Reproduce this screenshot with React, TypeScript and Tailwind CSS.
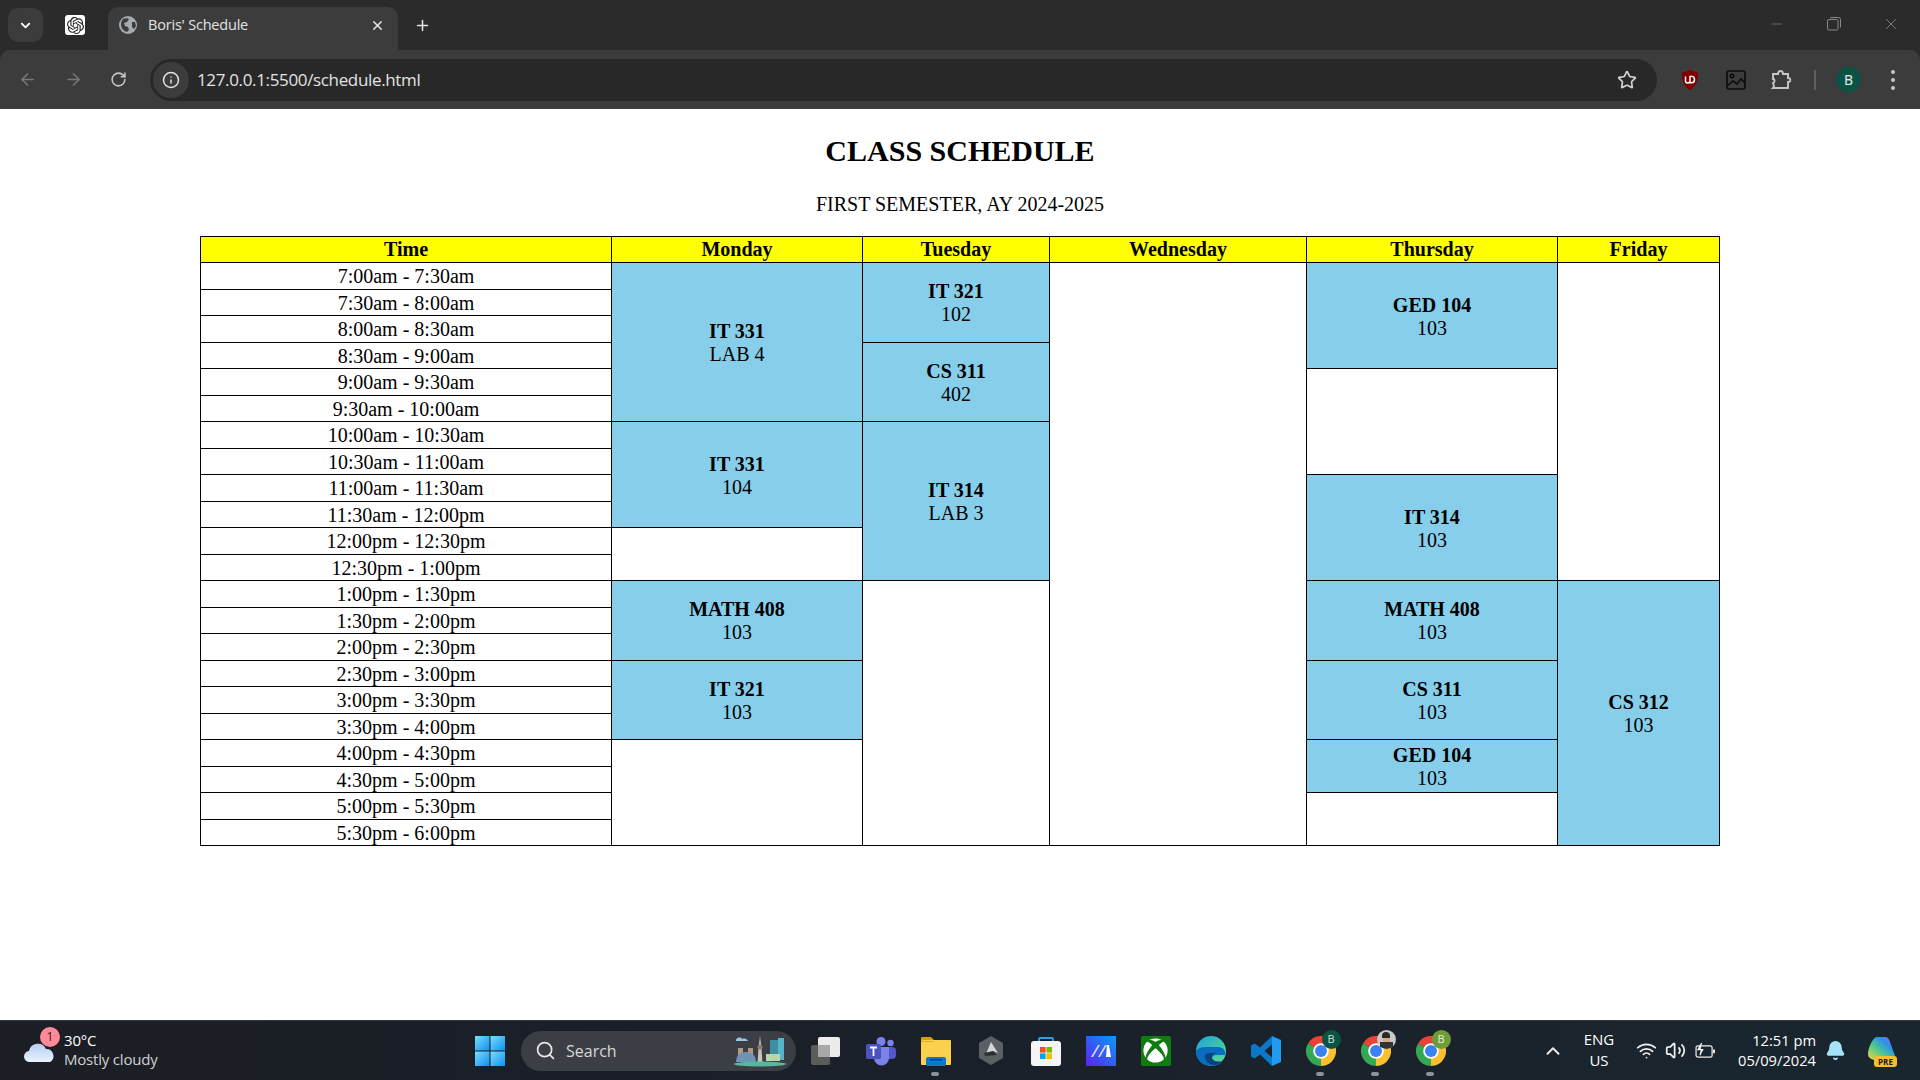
import React from "react";
import { ArrowLeft, ArrowRight, Bell, ChevronDown, ChevronUp, Info, Minus, Plus, RotateCw, Search, Star, Volume2, Wifi, X } from "lucide-react";
import { SiOpenai } from "react-icons/si";
import { FaXbox } from "react-icons/fa";

type Cell = { span: number; title?: string; room?: string };

const times = [
  "7:00am - 7:30am", "7:30am - 8:00am", "8:00am - 8:30am", "8:30am - 9:00am", "9:00am - 9:30am", "9:30am - 10:00am",
  "10:00am - 10:30am", "10:30am - 11:00am", "11:00am - 11:30am", "11:30am - 12:00pm", "12:00pm - 12:30pm", "12:30pm - 1:00pm",
  "1:00pm - 1:30pm", "1:30pm - 2:00pm", "2:00pm - 2:30pm", "2:30pm - 3:00pm", "3:00pm - 3:30pm", "3:30pm - 4:00pm",
  "4:00pm - 4:30pm", "4:30pm - 5:00pm", "5:00pm - 5:30pm", "5:30pm - 6:00pm",
];

const slots: Record<number, Cell[]> = {
  0: [
    { span: 6, title: "IT 331", room: "LAB 4" },
    { span: 3, title: "IT 321", room: "102" },
    { span: 22 },
    { span: 4, title: "GED 104", room: "103" },
    { span: 12 },
  ],
  3: [{ span: 3, title: "CS 311", room: "402" }],
  4: [{ span: 4 }],
  6: [
    { span: 4, title: "IT 331", room: "104" },
    { span: 6, title: "IT 314", room: "LAB 3" },
  ],
  8: [{ span: 4, title: "IT 314", room: "103" }],
  10: [{ span: 2 }],
  12: [
    { span: 3, title: "MATH 408", room: "103" },
    { span: 10 },
    { span: 3, title: "MATH 408", room: "103" },
    { span: 10, title: "CS 312", room: "103" },
  ],
  15: [
    { span: 3, title: "IT 321", room: "103" },
    { span: 3, title: "CS 311", room: "103" },
  ],
  18: [
    { span: 4 },
    { span: 2, title: "GED 104", room: "103" },
  ],
  20: [{ span: 2 }],
};

const days = ["Time", "Monday", "Tuesday", "Wednesday", "Thursday", "Friday"];

function Chrome({ badge }: { badge: React.ReactNode }) {
  return (
    <div className="relative w-[30px] h-[30px]">
      <svg viewBox="0 0 30 30" className="w-[30px] h-[30px]">
        <path d="M15 15L2 7.5A15 15 0 0 1 28 7.5Z" fill="#ea4335" />
        <path d="M15 15L28 7.5A15 15 0 0 1 15 30Z" fill="#fbc02d" />
        <path d="M15 15L15 30A15 15 0 0 1 2 7.5Z" fill="#34a853" />
        <circle cx="15" cy="15" r="7.8" fill="#fff" />
        <circle cx="15" cy="15" r="6" fill="#3b82f0" />
      </svg>
      {badge}
    </div>
  );
}

function TaskIcon({ children, dot }: { children: React.ReactNode; dot?: boolean }) {
  return (
    <div className="relative w-[55px] h-full flex items-center justify-center">
      {children}
      {dot && <div className="absolute bottom-[4px] left-[23px] w-[8px] h-[4px] rounded-full bg-[#8e9296]" />}
    </div>
  );
}

function Badge({ children, cls }: { children: React.ReactNode; cls: string }) {
  return (
    <div className={`absolute left-[16px] top-[-6px] w-[19px] h-[19px] rounded-full flex items-center justify-center text-[11px] ${cls}`}>
      {children}
    </div>
  );
}

export default function App() {
  return (
    <div className="w-[1920px] h-screen flex flex-col overflow-hidden bg-[#2b2b2b] font-['Noto_Sans',sans-serif]">
      {/* tab strip */}
      <div className="h-[50px] bg-[#2b2b2b] flex items-end shrink-0">
        <div className="w-[35px] h-[34px] ml-[8px] mb-[8px] rounded-[10px] bg-[#3c3c3c] flex items-center justify-center text-white">
          <ChevronDown size={15} strokeWidth={3} />
        </div>
        <div className="w-[20px] h-[20px] ml-[22px] mb-[15px] rounded-[3px] bg-white flex items-center justify-center text-[#222]">
          <SiOpenai size={17} />
        </div>
        <div className="relative w-[290px] h-[43px] ml-[23px] rounded-t-[10px] bg-[#3c3c3c] flex items-center pl-[11px] pb-[7px]">
          <svg viewBox="0 0 18 18" className="w-[18px] h-[18px]">
            <circle cx="9" cy="9" r="9" fill="#a6abb0" />
            <path d="M4 3c2-1 5-1 6 0l-2 3-3 1 1 3 3 1 1 3-2 2C5 15 2 13 2 8c0-2 1-4 2-5zM13 6l3 0 1 4-2 3-2-2z" fill="#3c3c3c" />
          </svg>
          <span className="ml-[11px] text-[14.5px] text-[#e3e3e3] font-['Open_Sans',sans-serif] tracking-[-0.2px]">Boris' Schedule</span>
          <X size={15} strokeWidth={2.5} className="absolute left-[262px] top-[11px] text-[#e3e3e3]" />
        </div>
        <Plus size={17} strokeWidth={2.2} className="ml-[16px] mb-[16px] text-[#e3e3e3]" />
        <div className="flex-1" />
        <Minus size={16} strokeWidth={1} className="mb-[18px] text-[#8a8a8a]" />
        <svg viewBox="0 0 14 14" className="w-[14px] h-[14px] ml-[42px] mb-[19px]" fill="none" stroke="#8a8a8a" strokeWidth="1">
          <rect x="0.5" y="2.5" width="10.5" height="10.5" rx="1.5" />
          <path d="M3.5 0.5h8a2 2 0 0 1 2 2v8" />
        </svg>
        <X size={18} strokeWidth={1} className="ml-[41px] mb-[17px] mr-[20px] text-[#9a9a9a]" />
      </div>

      {/* toolbar */}
      <div className="h-[59px] bg-[#3c3c3c] rounded-t-[10px] flex items-center shrink-0">
        <ArrowLeft size={19} className="ml-[18px] text-[#787878]" />
        <ArrowRight size={19} className="ml-[27px] text-[#787878]" />
        <RotateCw size={17} strokeWidth={2.2} className="ml-[27px] text-[#c7c7c7]" />
        <div className="w-[1507px] h-[42px] ml-[23px] rounded-full bg-[#282828] flex items-center pl-[3px]">
          <div className="w-[36px] h-[36px] rounded-full bg-[#3c3c3c] flex items-center justify-center">
            <Info size={18} className="text-[#e3e3e3]" />
          </div>
          <span className="ml-[8px] text-[17px] text-[#e3e3e3] font-['Open_Sans',sans-serif] tracking-[-0.35px]">127.0.0.1:5500/schedule.html</span>
          <div className="flex-1" />
          <Star size={20} strokeWidth={2} className="mr-[20px] text-[#d4d4d4]" />
        </div>
        <svg viewBox="0 0 20 22" className="w-[18px] h-[20px] ml-[24px]">
          <path d="M10 0l9 3c0 9-2 15-9 19C3 18 1 12 1 3z" fill="#800000" />
          <path d="M5 7v5c0 3 5 3 5 0V7M10 7h2c4 0 4 7 0 7h-2z" fill="none" stroke="#fff" strokeWidth="1.6" />
        </svg>
        <svg viewBox="0 0 20 20" className="w-[20px] h-[20px] ml-[27px]" fill="none" stroke="#0b0b0b" strokeWidth="1.6">
          <rect x="1" y="1" width="18" height="18" rx="2" />
          <circle cx="6" cy="6" r="1.7" />
          <path d="M1 16l6-5 4 3 4-5 4 4" />
        </svg>
        <svg viewBox="0 0 22 22" className="w-[22px] h-[22px] ml-[24px]" fill="none" stroke="#c7c7c7" strokeWidth="1.9">
          <path d="M3 5h5c0-4 5-4 5 0h5v4c3-1 3 5 0 4v6H3c1-1 1-3 0-5 2-1 2-4 0-4z" />
        </svg>
        <div className="w-[2px] h-[20px] ml-[22px] bg-[#606060]" />
        <div className="w-[25px] h-[25px] ml-[20px] rounded-full bg-[#0b5345] flex items-center justify-center text-[14px] text-[#e6e6e6]">B</div>
        <div className="ml-[30px] flex flex-col gap-[4px]">
          <div className="w-[4px] h-[4px] rounded-full bg-[#c7c7c7]" />
          <div className="w-[4px] h-[4px] rounded-full bg-[#c7c7c7]" />
          <div className="w-[4px] h-[4px] rounded-full bg-[#c7c7c7]" />
        </div>
      </div>

      {/* page */}
      <main className="flex-1 min-h-0 bg-white text-black font-['Liberation_Serif',serif] text-[20px] flex flex-col items-center">
        <h1 className="mt-[22px] text-[30px] leading-[40px] font-bold">CLASS SCHEDULE</h1>
        <p className="mt-[21px] leading-[24px]">FIRST SEMESTER, AY 2024-2025</p>
        <table className="mt-[20px] w-[1519px] table-fixed border-collapse border border-black">
          <colgroup>
            <col className="w-[411px]" />
            <col className="w-[251px]" />
            <col className="w-[187px]" />
            <col className="w-[257px]" />
            <col className="w-[251px]" />
            <col className="w-[162px]" />
          </colgroup>
          <thead>
            <tr className="h-[26px]">
              {days.map((d) => (
                <th key={d} className="bg-[#ffff00] border border-black p-0 font-bold text-center leading-[23px]">{d}</th>
              ))}
            </tr>
          </thead>
          <tbody>
            {times.map((t, i) => (
              <tr key={t} className="h-[26.5px]">
                <td className="border border-black p-0 pt-[2px] text-center leading-[23px]">{t}</td>
                {(slots[i] ?? []).map((c, j) => (
                  <td
                    key={j}
                    rowSpan={c.span}
                    className={c.title ? "bg-[#87ceeb] border border-black p-0 pt-[2px] text-center leading-[23px]" : "bg-white border border-black p-0"}
                  >
                    {c.title && (
                      <>
                        <b>{c.title}</b>
                        <br />
                        {c.room}
                      </>
                    )}
                  </td>
                ))}
              </tr>
            ))}
          </tbody>
        </table>
      </main>

      {/* taskbar */}
      <footer className="h-[60px] shrink-0 border-t border-[#33373c] bg-gradient-to-r from-[#1c1e25] via-[#1a2029] to-[#19262f] flex items-center text-white font-['Open_Sans',sans-serif]">
        <div className="relative w-[32px] h-[24px] ml-[24px] mt-[4px]">
          <div className="absolute left-[16px] top-[-14px] w-[20px] h-[20px] rounded-full bg-[#ff8a96] flex items-center justify-center text-[12px] text-[#222]">1</div>
          <svg viewBox="0 0 32 20" className="absolute left-0 top-[2px] w-[32px] h-[20px]">
            <defs>
              <linearGradient id="cl" x1="0" y1="0" x2="0" y2="1">
                <stop offset="0" stopColor="#b4cff5" />
                <stop offset="1" stopColor="#eaf2fd" />
              </linearGradient>
            </defs>
            <path d="M6 19a5.5 5.5 0 0 1-1-11 9 9 0 0 1 17-2 7 7 0 0 1 4 13z" fill="url(#cl)" />
          </svg>
        </div>
        <div className="ml-[8px] w-[100px] leading-[19px] -mt-[1px]">
          <div className="text-[15px] tracking-[-0.2px]">30°C</div>
          <div className="text-[15px] text-[#cfd1d4] tracking-[-0.2px] whitespace-nowrap">Mostly cloudy</div>
        </div>
        <svg viewBox="0 0 30 30" className="w-[30px] h-[30px] ml-[311px]">
          <defs>
            <linearGradient id="win" x1="0" y1="0" x2="1" y2="1">
              <stop offset="0" stopColor="#7fdcff" />
              <stop offset="1" stopColor="#0a8ff0" />
            </linearGradient>
          </defs>
          <rect x="0" y="0" width="14.5" height="14.5" fill="url(#win)" />
          <rect x="15.5" y="0" width="14.5" height="14.5" fill="url(#win)" />
          <rect x="0" y="15.5" width="14.5" height="14.5" fill="url(#win)" />
          <rect x="15.5" y="15.5" width="14.5" height="14.5" fill="url(#win)" />
        </svg>
        <div className="w-[275px] h-[40px] ml-[16px] rounded-full bg-[#3b3f45] flex items-center pl-[14px]">
          <Search size={21} strokeWidth={2} className="text-[#e6e6e6]" />
          <span className="ml-[10px] text-[16px] text-[#d8d8d8]">Search</span>
          <div className="flex-1" />
          <svg viewBox="0 0 56 34" className="w-[56px] h-[34px] mr-[8px]">
            <path d="M4 6c1-3 5-3 6-1 3-1 5 0 6 2H4z" fill="#9cc6e4" />
            <rect x="6" y="14" width="5" height="12" fill="#b49a7c" />
            <rect x="16" y="14" width="5" height="12" fill="#b49a7c" />
            <path d="M28 2l1.5 12 1 16h-5l1-16z" fill="#c9c3b8" />
            <circle cx="28" cy="13" r="2.5" fill="#8a7a70" />
            <rect x="38" y="6" width="8" height="20" fill="#3f8fa3" />
            <rect x="46" y="4" width="6" height="22" fill="#56b3c9" />
            <path d="M4 28c0-8 6-10 10-10s10 2 10 10z" fill="#6f93b5" />
            <rect x="34" y="20" width="14" height="7" fill="#b9d8a8" />
            <ellipse cx="28" cy="30" rx="26" ry="2.5" fill="#58b7a0" />
          </svg>
        </div>

        <div className="flex h-full ml-[2px]">
          <TaskIcon>
            <div className="relative w-[30px] h-[28px]">
              <div className="absolute left-0 top-[8px] w-[19px] h-[20px] rounded-[2px] bg-[#5b5b5b]" />
              <div className="absolute left-[7px] top-0 w-[22px] h-[20px] rounded-[2px] bg-[#ececec]" />
              <div className="absolute left-[7px] top-[8px] w-[12px] h-[12px] bg-[#a8a8a8]" />
            </div>
          </TaskIcon>
          <TaskIcon>
            <svg viewBox="0 0 30 30" className="w-[30px] h-[30px]">
              <circle cx="24.5" cy="7" r="3.2" fill="#7b83eb" />
              <rect x="19" y="11" width="11" height="12" rx="4" fill="#5059c9" />
              <circle cx="15" cy="5.5" r="4.5" fill="#7b83eb" />
              <path d="M8 11h15v11a7.5 7.5 0 0 1-15 0z" fill="#7b83eb" />
              <rect x="0" y="8" width="15" height="15" rx="1.5" fill="#4b53bc" />
              <path d="M4 11.5h7M7.5 11.5V20" stroke="#fff" strokeWidth="1.8" />
            </svg>
          </TaskIcon>
          <TaskIcon dot>
            <svg viewBox="0 0 30 30" className="w-[30px] h-[30px]">
              <path d="M0 2a1 1 0 0 1 1-1h9l3 3h-13z" fill="#d49f0f" />
              <rect x="0" y="4" width="30" height="25" rx="1" fill="#fcd04f" />
              <rect x="0" y="5" width="13" height="1" fill="#e3ae1f" />
              <rect x="5" y="21" width="20" height="9" rx="2" fill="#0b78d0" />
              <rect x="9" y="23" width="12" height="1.4" fill="#0a3f78" />
            </svg>
          </TaskIcon>
          <TaskIcon>
            <svg viewBox="0 0 26 30" className="w-[26px] h-[30px]">
              <path d="M13 0l12 7v15l-12 7-12-7V7z" fill="#5c6065" />
              <path d="M13 6l7 11-5-2-7 3z" fill="#d4d6d8" />
              <path d="M6 17l9-2 4 4-12 1z" fill="#2c2f33" />
            </svg>
          </TaskIcon>
          <TaskIcon>
            <svg viewBox="0 0 30 30" className="w-[30px] h-[30px]">
              <path d="M8 6V3a1 1 0 0 1 1-1h12a1 1 0 0 1 1 1v3" fill="none" stroke="#2aa5e0" strokeWidth="1.8" />
              <rect x="0" y="5" width="30" height="25" rx="3" fill="#f5f5f5" />
              <rect x="9" y="11" width="5.6" height="5.6" fill="#f25022" />
              <rect x="15.4" y="11" width="5.6" height="5.6" fill="#7fba00" />
              <rect x="9" y="17.4" width="5.6" height="5.6" fill="#00a4ef" />
              <rect x="15.4" y="17.4" width="5.6" height="5.6" fill="#ffb900" />
            </svg>
          </TaskIcon>
          <TaskIcon>
            <svg viewBox="0 0 30 30" className="w-[30px] h-[30px]">
              <defs>
                <linearGradient id="ma" x1="0" y1="1" x2="1" y2="0">
                  <stop offset="0" stopColor="#5b21f0" />
                  <stop offset="1" stopColor="#0a9cf5" />
                </linearGradient>
              </defs>
              <rect width="30" height="30" fill="url(#ma)" />
              <path d="M5 21l7-12h2l-7 12zM12 21l7-12h2l-7 12z" fill="#d9d2f7" />
              <path d="M21 9h2l2 12h-5z" fill="#fff" />
            </svg>
          </TaskIcon>
          <TaskIcon>
            <div className="w-[30px] h-[30px] rounded-[2px] bg-[#107c10] flex items-center justify-center text-white">
              <FaXbox size={25} />
            </div>
          </TaskIcon>
          <TaskIcon>
            <svg viewBox="0 0 30 30" className="w-[30px] h-[30px]">
              <defs>
                <linearGradient id="ed" x1="0" y1="0" x2="1" y2="1">
                  <stop offset="0" stopColor="#1aa3d8" />
                  <stop offset="1" stopColor="#5fe08a" />
                </linearGradient>
              </defs>
              <circle cx="15" cy="15" r="15" fill="url(#ed)" />
              <path d="M0 15C0 24 7 30 15 30c5 0 9-2 12-5-4 2-11 1-11-3 0-2 2-3 4-3h9c1-6-3-8-8-8C10 11 3 10 0 15z" fill="#0a6cbf" />
              <path d="M9 20c0 5 4 9 9 9 3 0 6-2 8-4-3 1-10 1-10-4 0-2 2-3 4-4-6-1-11 0-11 3z" fill="#0c3f80" />
            </svg>
          </TaskIcon>
          <TaskIcon>
            <svg viewBox="0 0 30 30" className="w-[30px] h-[30px]">
              <path fillRule="evenodd" d="M21 0L9 11.5 3.5 7.5 0 9.5v11l3.5 2 5.5-4L21 30zM21 8.5l-7.5 6.5 7.5 6.5z" fill="#0a78c4" />
              <path fillRule="evenodd" d="M21 0l9 4v22l-9 4z" fill="#1f9cf0" />
            </svg>
          </TaskIcon>
          <TaskIcon dot>
            <Chrome badge={<Badge cls="bg-[#0b5345] text-[#cfe0da]">B</Badge>} />
          </TaskIcon>
          <TaskIcon dot>
            <Chrome
              badge={
                <div className="absolute left-[16px] top-[-6px] w-[19px] h-[19px] rounded-full bg-[#c9c9c9] overflow-hidden">
                  <div className="w-[8px] h-[6px] mx-auto mt-[2px] rounded-t-full bg-[#2a2a2a]" />
                  <div className="w-[7px] h-[4px] mx-auto bg-[#d9a98a]" />
                  <div className="w-[13px] h-[7px] mx-auto bg-[#333]" />
                </div>
              }
            />
          </TaskIcon>
          <TaskIcon dot>
            <Chrome badge={<Badge cls="bg-[#6f9c3a] text-[#e6eed8]">B</Badge>} />
          </TaskIcon>
        </div>

        <ChevronUp size={22} strokeWidth={2.2} className="ml-[84px] text-[#e8e8e8]" />
        <div className="ml-[17px] w-[36px] text-center text-[15px] leading-[21px] -mt-[1px]">
          <div>ENG</div>
          <div>US</div>
        </div>
        <Wifi size={21} className="ml-[19px] text-[#f0f0f0]" />
        <Volume2 size={21} className="ml-[8px] text-[#f0f0f0]" />
        <svg viewBox="0 0 22 18" className="w-[21px] h-[17px] ml-[9px]" fill="none" stroke="#f0f0f0" strokeWidth="1.3">
          <rect x="1" y="4" width="17" height="12" rx="2" />
          <path d="M20 8v4" strokeWidth="2" />
          <path d="M7 1L3 8h5l-3 6" fill="#f0f0f0" />
        </svg>
        <div className="ml-[4px] w-[96px] text-right text-[14.7px] leading-[20px] whitespace-nowrap -mt-[1px]">
          <div>12:51 pm</div>
          <div>05/09/2024</div>
        </div>
        <Bell size={21} fill="#a5e3fb" className="ml-[9px] text-[#a5e3fb]" />
        <div className="relative w-[30px] h-[30px] ml-[21px]">
          <svg viewBox="0 0 30 26" className="w-[30px] h-[26px]">
            <defs>
              <linearGradient id="cp" x1="0" y1="1" x2="1" y2="0">
                <stop offset="0" stopColor="#f6d743" />
                <stop offset="0.4" stopColor="#4fc98a" />
                <stop offset="0.7" stopColor="#2a8ff0" />
                <stop offset="1" stopColor="#d855c8" />
              </linearGradient>
            </defs>
            <path d="M10 1h8c3 0 4 2 5 5l5 14c1 3-1 4-4 4H10c-5 0-9-2-9-6C1 12 6 1 10 1z" fill="url(#cp)" />
          </svg>
          <div className="absolute left-[7px] top-[20px] w-[23px] h-[11px] rounded-[3px] bg-[#f8bd2a] text-[#1a1a1a] text-[8px] leading-[11px] font-bold text-center">PRE</div>
        </div>
      </footer>
    </div>
  );
}
